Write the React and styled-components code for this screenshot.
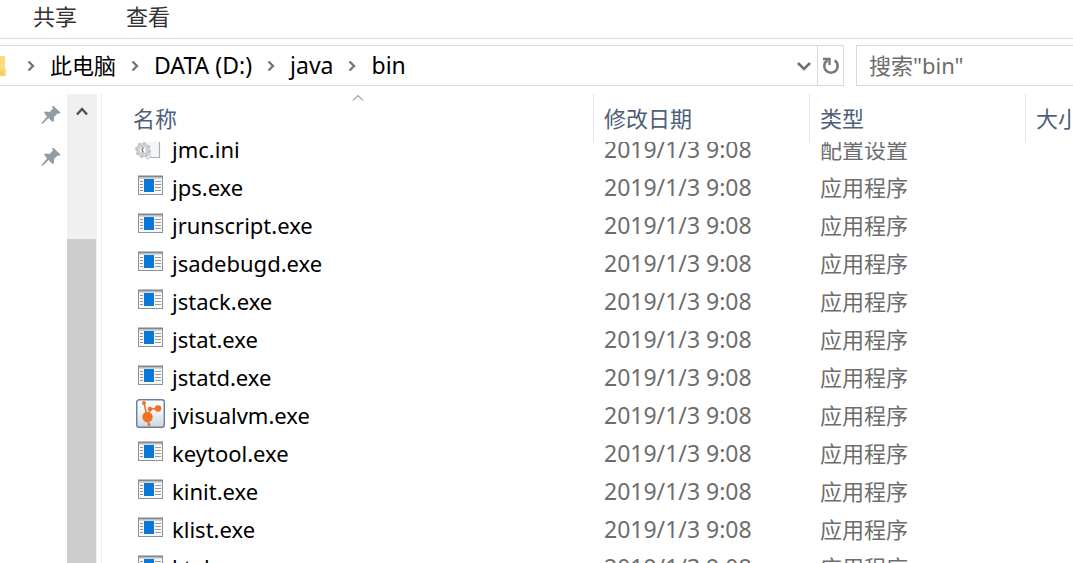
import React from "react";
import styled, { createGlobalStyle } from "styled-components";

const GlobalStyle = createGlobalStyle`
  * { box-sizing: border-box; }
  body {
    margin: 0;
    background: #fff;
    color: #000;
    font: 22px/36px "Noto Sans", "Noto Sans CJK SC", sans-serif;
  }
  button, input {
    font: inherit;
    color: inherit;
    background: none;
    border: 0;
    padding: 0;
    margin: 0;
  }
  svg { display: block; flex: none; }
`;

const Explorer = styled.div`
  display: flex;
  flex-direction: column;
  height: 100vh;
  overflow: hidden;
`;

const Ribbon = styled.nav`
  display: flex;
  flex: none;
  gap: 49px;
  height: 39px;
  padding-left: 33px;
  border-bottom: 1px solid #d9d9d9;
`;

const RibbonTab = styled.button`
  height: 32px;
  line-height: 32px;
  color: #333;
`;

const NavigationRow = styled.div`
  display: flex;
  flex: none;
  gap: 12px;
  padding: 6px 0 8px;
`;

const AddressBar = styled.div`
  display: flex;
  flex: 1;
  align-items: stretch;
  height: 41px;
  border: 1px solid #d9d9d9;
  border-left: 0;
`;

const Breadcrumbs = styled.div`
  display: flex;
  flex: 1;
  align-items: center;
  gap: 15px;
`;

const Crumb = styled.button`
  padding-bottom: 2px;
  font-size: ${(p) => (p.$latin ? 23 : 22)}px;
  line-height: 36px;
  white-space: nowrap;
`;

const AddressButton = styled.button`
  display: flex;
  align-items: center;
  justify-content: center;
  width: 26px;
  border-left: ${(p) => (p.$divided ? "1px solid #d9d9d9" : "0")};
`;

const SearchBox = styled.input`
  width: 217px;
  height: 41px;
  padding: 0 0 2px 12px;
  border: 1px solid #d9d9d9;
  border-right: 0;
  border-radius: 0;
  &::placeholder { color: #6d6d6d; opacity: 1; }
`;

const Content = styled.div`
  display: flex;
  flex: 1;
  min-height: 0;
`;

const QuickAccess = styled.aside`
  display: flex;
  flex: none;
  flex-direction: column;
  align-items: flex-end;
  gap: 22px;
  width: 67px;
  padding: 11px 6px 0 0;
`;

const ScrollBar = styled.div`
  display: flex;
  flex: none;
  flex-direction: column;
  width: 30px;
  background: #f0f0f0;
`;

const ScrollButton = styled.button`
  display: flex;
  justify-content: center;
  height: 145px;
  padding-top: 12px;
`;

const ScrollThumb = styled.div`
  flex: 1;
  margin-right: 1px;
  background: #cdcdcd;
`;

const ListPane = styled.main`
  flex: 1;
  min-width: 0;
  margin-left: 4px;
  padding-left: 21px;
  border-left: 1px solid #f0f0f0;
  overflow: hidden;
`;

const FileTable = styled.table`
  display: flex;
  flex-direction: column;
  height: 100%;
`;

const HeaderGroup = styled.thead`
  display: block;
  flex: none;
`;

const FileGroup = styled.tbody`
  display: block;
  flex: 1;
  min-height: 0;
  overflow: hidden;
  & > tr:first-child { margin-top: -11px; }
`;

const Row = styled.tr`
  display: grid;
  grid-template-columns: 471px 216px 216px 160px;
`;

const HeaderCell = styled.th`
  position: relative;
  height: 48px;
  padding: 0 0 0 10px;
  border-right: 1px solid #e5e5e5;
  color: #4c607a;
  font-weight: 400;
  line-height: 48px;
  text-align: left;
  white-space: nowrap;
`;

const SortMark = styled.svg`
  position: absolute;
  top: 0;
  left: 50%;
  margin-left: -6px;
`;

const NameCell = styled.td`
  display: flex;
  align-items: center;
  gap: 6px;
  height: 38px;
  padding: 0 0 2px 11px;
  white-space: nowrap;
  & > svg { margin-bottom: 2px; }
`;

const InfoCell = styled.td`
  height: 38px;
  padding: 0 0 0 10px;
  color: #6d6d6d;
  font-size: ${(p) => (p.$latin ? 23 : 22)}px;
  white-space: nowrap;
`;

const FolderIcon = () => (
  <svg width="12" height="22" viewBox="0 0 12 22" aria-hidden="true">
    <path d="M0 1h5v13h1v7H0z" fill="#fbdc7c" />
    <path d="M0 15h4v6H0z" fill="#f5cf62" />
  </svg>
);

const CrumbArrow = () => (
  <svg width="8" height="12" viewBox="0 0 8 12" aria-hidden="true">
    <path d="M1.500 1.500L6 6l-4.500 4.500" fill="none" stroke="#777" strokeWidth="2.400" />
  </svg>
);

const PinIcon = () => (
  <svg width="20" height="20" viewBox="0 0 20 20" aria-hidden="true">
    <path
      d="M12 0.500L19.500 7.500L18 9L16.500 8.500L13 12V16L11.500 17L7.500 13L2 18.500L0.500 19L1 17.500L6 11.500L3 7.500L4 6.500L8.500 7L12 3.500L11 2z"
      fill="#919da5"
    />
  </svg>
);

const ProgramIcon = () => (
  <svg width="32" height="32" viewBox="0 0 32 32" aria-hidden="true">
    <rect x="4.500" y="6.500" width="24" height="18" fill="#f8f8f8" stroke="#8c9295" />
    <path d="M4 6.500h25" stroke="#81878a" strokeWidth="2" />
    <path d="M5 8.500h23" stroke="#d5d8da" />
    <path d="M6 11.500h3M6 14.500h3M6 17.500h3M6 20.500h3" stroke="#8b9498" />
    <rect x="10" y="9" width="10" height="13" fill="#0879d9" />
    <path d="M21 11.500h6M21 17.500h6M21 20.500h6" stroke="#99a0a3" />
    <path d="M21 14.500h6" stroke="#c38d7b" />
  </svg>
);

const SettingsIcon = () => (
  <svg width="32" height="32" viewBox="0 0 32 32" aria-hidden="true">
    <path d="M8 4h17v21H8z" fill="#f4f5f6" />
    <path d="M25.500 4v21.500H15" fill="none" stroke="#a9adb0" strokeWidth="1.200" />
    <circle cx="9" cy="18" r="5" fill="none" stroke="#cdd0d2" strokeWidth="4" />
    <circle cx="9" cy="18" r="7" fill="none" stroke="#bec2c4" strokeWidth="2" strokeDasharray="2.800 2.700" />
    <circle cx="14" cy="24" r="2.500" fill="none" stroke="#c8ccce" strokeWidth="2" strokeDasharray="2 1" />
    <path d="M9.500 15.500a3 3 0 0 0 0 5" fill="none" stroke="#858b8f" strokeWidth="1.600" />
  </svg>
);

const VisualVmIcon = () => (
  <svg width="32" height="32" viewBox="0 0 32 32" aria-hidden="true">
    <defs>
      <linearGradient id="vmPlate" x1="0" y1="0" x2="0" y2="1">
        <stop offset="0" stopColor="#fff" />
        <stop offset="0.500" stopColor="#eef1f4" />
        <stop offset="1" stopColor="#ccd6e0" />
      </linearGradient>
    </defs>
    <rect x="2.700" y="1.700" width="27.600" height="27.600" rx="2.500" fill="url(#vmPlate)" stroke="#688096" strokeWidth="1.400" />
    <path d="M10 5l3 13M13 18l4-7M16 11l8-0.500M13 18l2 9" stroke="#ee7125" strokeWidth="1.500" />
    <g fill="#ee7125">
      <circle cx="10" cy="5" r="2" />
      <circle cx="16" cy="11" r="2.200" />
      <circle cx="24" cy="10.500" r="3.200" />
      <circle cx="13.500" cy="19" r="5.200" />
      <circle cx="15" cy="26.500" r="1.500" />
    </g>
  </svg>
);

const icons = { program: ProgramIcon, settings: SettingsIcon, visual: VisualVmIcon };

const programs = (names) =>
  names.map((name) => ({ name, type: "应用程序", icon: "program" }));

const files = [
  { name: "jmc.ini", type: "配置设置", icon: "settings" },
  ...programs(["jps.exe", "jrunscript.exe", "jsadebugd.exe", "jstack.exe", "jstat.exe", "jstatd.exe"]),
  { name: "jvisualvm.exe", type: "应用程序", icon: "visual" },
  ...programs(["keytool.exe", "kinit.exe", "klist.exe", "ktab.exe"]),
];

const path = [
  { label: "此电脑" },
  { label: "DATA (D:)", latin: true },
  { label: "java", latin: true },
  { label: "bin", latin: true },
];

export default function App() {
  return (
    <Explorer>
      <GlobalStyle />
      <Ribbon>
        <RibbonTab>共享</RibbonTab>
        <RibbonTab>查看</RibbonTab>
      </Ribbon>
      <NavigationRow>
        <AddressBar>
          <Breadcrumbs>
            <FolderIcon />
            {path.map((step) => (
              <React.Fragment key={step.label}>
                <CrumbArrow />
                <Crumb $latin={step.latin}>{step.label}</Crumb>
              </React.Fragment>
            ))}
          </Breadcrumbs>
          <AddressButton aria-label="历史记录">
            <svg width="14" height="10" viewBox="0 0 14 10">
              <path d="M1 2l6 6 6-6" fill="none" stroke="#707070" strokeWidth="2.600" />
            </svg>
          </AddressButton>
          <AddressButton $divided aria-label="刷新">
            <svg width="18" height="18" viewBox="0 0 18 18">
              <path d="M12.500 3.300A6.700 6.700 0 1 1 5.500 3.300" fill="none" stroke="#777" strokeWidth="2.600" />
              <path d="M1 2h6.500v6" fill="none" stroke="#777" strokeWidth="2.400" />
            </svg>
          </AddressButton>
        </AddressBar>
        <SearchBox type="text" aria-label="搜索" placeholder={'搜索"bin"'} />
      </NavigationRow>
      <Content>
        <QuickAccess>
          <PinIcon />
          <PinIcon />
        </QuickAccess>
        <ScrollBar>
          <ScrollButton aria-label="向上滚动">
            <svg width="12" height="10" viewBox="0 0 12 10">
              <path d="M1 8.500L6 3l5 5.500" fill="none" stroke="#505050" strokeWidth="2.400" />
            </svg>
          </ScrollButton>
          <ScrollThumb />
        </ScrollBar>
        <ListPane>
          <FileTable>
            <HeaderGroup>
              <Row>
                <HeaderCell scope="col">
                  名称
                  <SortMark width="12" height="8" viewBox="0 0 12 8" aria-hidden="true">
                    <path d="M1 6.500L6 1.500l5 5" fill="none" stroke="#666" />
                  </SortMark>
                </HeaderCell>
                <HeaderCell scope="col">修改日期</HeaderCell>
                <HeaderCell scope="col">类型</HeaderCell>
                <HeaderCell scope="col">大小</HeaderCell>
              </Row>
            </HeaderGroup>
            <FileGroup>
              {files.map((file) => {
                const Icon = icons[file.icon];
                return (
                  <Row key={file.name}>
                    <NameCell>
                      <Icon />
                      {file.name}
                    </NameCell>
                    <InfoCell $latin>2019/1/3 9:08</InfoCell>
                    <InfoCell>{file.type}</InfoCell>
                  </Row>
                );
              })}
            </FileGroup>
          </FileTable>
        </ListPane>
      </Content>
    </Explorer>
  );
}
